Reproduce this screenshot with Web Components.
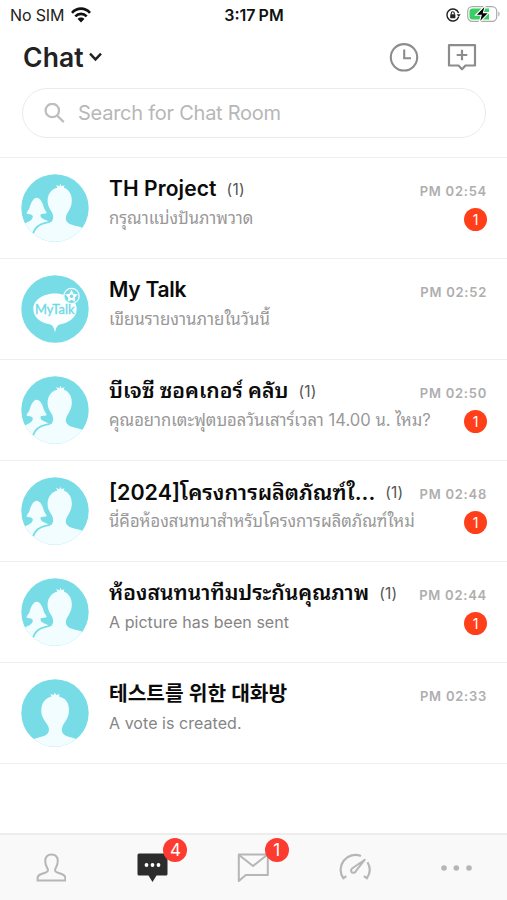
<!DOCTYPE html>
<html lang="en">
<head>
<meta charset="utf-8">
<title>Chat</title>
<style>
html,body{margin:0;height:100%;background:#fff}
body{font-family:Inter,"Noto Sans Thai Looped","Loma","Garuda","Waree","Noto Sans Thai","Noto Sans","Noto Sans CJK KR",sans-serif;color:#0b0b0b}
</style>
</head>
<body>
<chat-app></chat-app>
<script>
const define = (name, html) => customElements.define(name, class extends HTMLElement {
  connectedCallback() {
    if (this.shadowRoot) return;
    const t = document.createElement('template');
    t.innerHTML = typeof html === 'function' ? html(this) : html;
    this.attachShadow({mode: 'open'}).append(t.content.cloneNode(true));
  }
});

define('status-bar', `
<style>
:host{display:grid;grid-template-columns:1fr auto 1fr;align-items:center;height:30px;padding:0 7px 0 10px;box-sizing:border-box;color:#222;font-size:16px}
.l{display:flex;align-items:center;gap:7px;letter-spacing:-.15px}
.c{font-weight:600;letter-spacing:0;word-spacing:-1px;color:#111;margin-left:-2px}
.r{display:flex;align-items:center;justify-content:flex-end;gap:6px}
svg{display:block}
</style>
<div class="l"><span>No SIM</span>
<svg width="20" height="16" viewBox="0 0 20 16" fill="none" stroke="#111" stroke-width="2.6"><path d="M1 5.800C6 .2 14 .2 19 5.800"/><path d="M4.300 9.300c3.200-3.300 8.200-3.300 11.400 0"/><path d="M6.600 11.900c1.800-1.800 5-1.800 6.800 0L10 15.400z" fill="#111" stroke="none"/></svg></div>
<div class="c">3:17 PM</div>
<div class="r">
<svg width="15" height="14" viewBox="0 0 15 14" fill="none" stroke="#222" stroke-width="1.400"><path d="M12.600 5A6 6 0 1 0 12.600 9"/><path d="M10.700 6.200h4L12.700 9z" fill="#222" stroke="none"/><rect x="4.200" y="6.200" width="5.200" height="4" rx=".6" fill="#222" stroke="none"/><path d="M5.300 6.500V5.200a1.500 1.500 0 0 1 3 0v1.300" stroke-width="1.100"/></svg>
<svg width="33" height="18" viewBox="0 0 33 18" style="margin-top:-2px"><rect x=".7" y="1.700" width="29" height="14.600" rx="4.600" fill="#fff" stroke="#aaa" stroke-width="1.200"/><path d="M5.500 3.500H22v11H5.500A3 3 0 0 1 2.500 11.500v-5A3 3 0 0 1 5.500 3.500z" fill="#38ce63"/><path d="M31.300 6.600c1.600.6 1.600 4.200 0 4.800z" fill="#aaa"/><path d="M18.500 0 8.500 10.300h5.700L12 18l10-10.400h-5.600z" fill="#000" stroke="#fff" stroke-width="1.100"/></svg>
</div>`);

define('chat-header', `
<style>
:host{display:flex;align-items:center;height:54px;padding:0 30px 0 23px;box-sizing:border-box}
h1{margin:0;font-size:26.500px;font-weight:600;letter-spacing:.1px;color:#222}
.v{margin:0 auto 0 5px}
.n{margin-left:28px}
svg{display:block}
</style>
<h1>Chat</h1>
<svg class="v" width="13" height="10" viewBox="0 0 13 10" fill="none" stroke="#222" stroke-width="2.400"><path d="M1 1.600 6.500 7.400 12 1.600"/></svg>
<svg width="30" height="30" viewBox="0 0 30 30" fill="none" stroke="#8c8c8c" stroke-width="2.100"><circle cx="15" cy="15.300" r="13.200"/><path d="M15.200 7.600v8.700h6.800"/></svg>
<svg class="n" width="30" height="30" viewBox="0 0 30 30" fill="none" stroke="#8c8c8c" stroke-width="2.200" stroke-linejoin="round"><path d="M2 3.200h26v20.300h-9.500L15 27.300l-3.500-3.800H2z"/><path d="M15 7.700v10.600M9.700 13h10.600"/></svg>`);

define('search-box', `
<style>
:host{display:flex;align-items:center;height:50px;margin:4px 21px 0 22px;padding:0 21px;box-sizing:border-box;border:1.500px solid #ebebeb;border-radius:25px;color:#b7b7b7;font-size:20px;letter-spacing:-.25px}
span{margin-left:13px}
</style>
<svg width="21" height="21" viewBox="0 0 21 21" fill="none" stroke="#bebebe" stroke-width="2.300"><circle cx="8.300" cy="7.500" r="6.700"/><path d="m13 12.500 6.800 6.600"/></svg>
<span><slot></slot></span>`);

const person = {
  group: `<path d="M15.700 23.800c3.600 0 6.300 6 7.200 10 .7 2.300 2.800 4 2.800 5.300-1.500 1.300-6 .2-6.200 2-.2 4 4.500 3.900 9 6.900L12 62-3 60 2 50.500c4-2.500 9.800-3.500 9.800-8 0-2.800-5-1.900-6.300-3.300.4-1.700 2.200-2.900 3-5.200 1-4 3.600-10.200 7.200-10.200z"/>
  <path d="M36.500 13.500 35 11l3.600 1.300.5-2.500 1.600 2.500 2.600-1.100-.3 2.500c5 1.900 8 6.600 7.800 13.300-.2 7.300-4 10.500-5.600 15-.8 3-.6 5.200 2.400 7.300C51.500 52 59 52 64 55L52 72H6l6-13c3-7 6-8.500 12.500-9.700 5-1 7.400-2.500 7.700-5.300.2-7.500-5.400-8-5.600-17-.1-7 3.900-11.900 9.900-13.500z"/>
  <path d="M12 59.500c2.500-7.500 7-9.500 12.500-10.600 3-.5 5-1.300 6.500-2.500" fill="none" stroke="#78dce7" stroke-width="1.800"/>`,
  single: `<path d="M30.500 17.500 29.300 15l3.500 1 .9-2.500 1.500 2.500 3.300-1-.5 2.500c6.300 1.500 10.200 6 10 14-.2 8.500-5.200 11.500-6.800 17-.9 4 .1 6.300 3.500 8.200C48 58.300 53 58.500 57 61L49 74H20l-9-13c4-2.500 9.500-2.700 13.200-4.500 3.600-1.900 4.200-5 3.400-8-1.500-5.300-7.100-8-7.300-16.500-.2-8 4.200-13 10.200-14.500z"/>`
};
define('room-avatar', el => `
<style>
:host{display:block;width:68px;height:68px}
svg{display:block}
.t{font-family:Lato,Inter,sans-serif;font-size:13px;font-weight:400;stroke:#6fd8e5;stroke-width:.35px}
</style>
<svg width="68" height="68" viewBox="0 0 68 68"><defs><clipPath id="c"><circle cx="34" cy="34" r="33.700"/></clipPath></defs>
<g clip-path="url(#c)"><rect width="68" height="68" fill="#78dce7"/>
${el.getAttribute('kind') === 'talk' ? `
<path d="M34 18.500c12 0 21.700 6.500 21.700 15.500 0 8.700-8.200 14-17.200 15.500-2.500 1-3.500 4-4.500 7.800-1-3.800-2-6.800-4.500-7.800C20 48 12.300 42.500 12.300 34c0-9 9.700-15.500 21.700-15.500z" fill="#fbffff"/>
<text class="t" x="14" y="38.800" textLength="39.500" lengthAdjust="spacingAndGlyphs" fill="#6fd8e5">MyTalk</text>
<circle cx="50.500" cy="21" r="7.700" fill="#78dce7" stroke="#f3ffff" stroke-width="1.200"/>
<path d="m50.500 14.800 2 4 4.300.6-3.100 3 .7 4.300-3.900-2-3.900 2 .7-4.300-3.100-3 4.300-.6z" fill="#fff"/><circle cx="50.500" cy="21.300" r="1.700" fill="#78dce7"/>`
: `<g fill="#f1fdff">${person[el.getAttribute('kind')]}</g>`}
</g></svg>`);

define('count-badge', `
<style>
:host{display:flex;align-items:center;justify-content:center;width:23px;height:23px;border-radius:50%;background:#ff3f19;color:#fff;font-size:14px;line-height:1}
</style><slot></slot>`);

define('chat-row', el => `
<style>
:host{display:grid;grid-template-columns:68px minmax(0,1fr) auto;column-gap:20px;height:101px;padding:16px 20px 0 21px;box-sizing:border-box;border-top:1px solid #efefef}
.m{display:flex;flex-direction:column;white-space:nowrap}
.h{display:flex;align-items:center;height:30px;gap:10px}
.h b{line-height:30px;font-size:${el.getAttribute('ts') || 21}px;font-weight:600;letter-spacing:${el.getAttribute('tl') || 0}px;color:#0b0b0b}
.h i{font-style:normal;font-size:15.500px;letter-spacing:.2px;color:#555}
.s{height:26px;line-height:26px;padding-top:1px;font-size:${el.getAttribute('ss') || 16}px;letter-spacing:${el.getAttribute('sl') || 0}px;color:${el.getAttribute('sc') || '#989898'}}
.e{display:flex;flex-direction:column;align-items:flex-end;padding-top:8px;width:68px;margin-left:-20px;white-space:nowrap}
.e time{font-size:13px;line-height:18px;font-weight:600;letter-spacing:.75px;color:#aeaeae}
count-badge{margin-top:8px}
</style>
<room-avatar kind="${el.getAttribute('kind')}"></room-avatar>
<div class="m"><div class="h"><b><slot name="title"></slot></b>${el.hasAttribute('members') ? `<i>(${el.getAttribute('members')})</i>` : ''}</div>
<div class="s"><slot></slot></div></div>
<div class="e"><time>PM ${el.getAttribute('time')}</time>${el.hasAttribute('unread') ? `<count-badge>${el.getAttribute('unread')}</count-badge>` : ''}</div>`);

define('tab-item', el => `
<style>
:host{display:flex;justify-content:center;align-items:center;position:relative}
svg{display:block;overflow:visible}
count-badge{position:absolute;left:62px;top:3px;width:24px;height:24px;font-size:17px;background:#fd3b31}
</style><slot></slot>${el.hasAttribute('count') ? `<count-badge>${el.getAttribute('count')}</count-badge>` : ''}`);

define('tab-bar', `
<style>
:host{display:grid;grid-template-columns:repeat(5,1fr);height:67px;box-sizing:border-box;border-top:2px solid #ededed;background:#f9f9f9}
svg{display:block}
</style>
<tab-item><svg width="30" height="30" viewBox="0 0 30 30" fill="none" stroke="#b6b6b6" stroke-width="2"><path d="M15.500 1.500c4 0 6.300 2.600 6.300 6.500 0 3.500-1.200 5.500-2.300 7.500-.8 1.700-.5 3 1.200 3.700l5.500 2c2.300.9 3.200 2 3.200 4v2.300H1.600v-2.300c0-2 .9-3.100 3.200-4l5.500-2c1.700-.7 2-2 1.200-3.700-1.100-2-2.300-4-2.300-7.500 0-3.900 2.300-6.500 6.300-6.500z"/></svg></tab-item>
<tab-item count="4"><svg width="31" height="30" viewBox="0 0 31 30"><path d="M2 .6h27a1.500 1.500 0 0 1 1.500 1.500V21a1.500 1.500 0 0 1-1.500 1.500h-9.500L15.500 29l-4-6.500H2A1.500 1.500 0 0 1 .5 21V2.100A1.500 1.500 0 0 1 2 .6z" fill="#2c2c2c"/><g fill="#fff"><circle cx="9.500" cy="12" r="1.900"/><circle cx="15.500" cy="12" r="1.900"/><circle cx="21.500" cy="12" r="1.900"/></g></svg></tab-item>
<tab-item count="1"><svg width="32" height="30" viewBox="0 0 32 30" fill="none" stroke="#b6b6b6" stroke-width="2" stroke-linejoin="round"><path d="M1.800 1.600h29v20.300H8.800L1.800 28z"/><path d="m2 2 14 11L30 2"/></svg></tab-item>
<tab-item><svg width="34" height="30" viewBox="0 0 34 30" fill="none" stroke="#b6b6b6" stroke-width="2.200"><path d="M23 3A14.800 14.800 0 0 0 5.300 25.200l3-2M29.500 9.200a14.800 14.800 0 0 1-.6 16l-3-2"/><path d="M26.800 6.700 14 15.500c-2 1.800-.6 4.900 2 4.200 1.200-.3 1.700-1 2.200-2z" stroke-linejoin="round" stroke-width="2"/></svg></tab-item>
<tab-item><svg width="31" height="6" viewBox="0 0 31 6" fill="#b6b6b6"><circle cx="3" cy="3" r="2.800"/><circle cx="15.300" cy="3" r="2.800"/><circle cx="28" cy="3" r="2.800"/></svg></tab-item>`);

define('chat-app', `
<style>
:host{display:flex;flex-direction:column;width:507px;height:900px;background:#fff;overflow:hidden}
main{flex:1;padding-top:19px}
.end{height:1px;background:#efefef}
</style>
<status-bar></status-bar>
<chat-header></chat-header>
<search-box>Search for Chat Room</search-box>
<main>
<chat-row kind="group" members="1" unread="1" time="02:54" tl=".1" ss="16.600"><span slot="title">TH Project</span>กรุณาแบ่งปันภาพวาด</chat-row>
<chat-row kind="talk" time="02:52" tl="-.25" ss="16.850"><span slot="title">My Talk</span>เขียนรายงานภายในวันนี้</chat-row>
<chat-row kind="group" members="1" unread="1" time="02:50" ts="21.100" ss="16.600"><span slot="title">บีเจซี ซอคเกอร์ คลับ</span>คุณอยากเตะฟุตบอลวันเสาร์เวลา 14.00 น. ไหม?</chat-row>
<chat-row kind="group" members="1" unread="1" time="02:48" ts="21.500" ss="16.600"><span slot="title">[2024]โครงการผลิตภัณฑ์ใ...</span>นี่คือห้องสนทนาสำหรับโครงการผลิตภัณฑ์ใหม่</chat-row>
<chat-row kind="group" members="1" unread="1" time="02:44" ts="21.100" sc="#858585" sl=".05"><span slot="title">ห้องสนทนาทีมประกันคุณภาพ</span>A picture has been sent</chat-row>
<chat-row kind="single" time="02:33" ts="20.300" sc="#858585" sl=".05"><span slot="title">테스트를 위한 대화방</span>A vote is created.</chat-row>
<div class="end"></div>
</main>
<tab-bar></tab-bar>`);
</script>
</body>
</html>
